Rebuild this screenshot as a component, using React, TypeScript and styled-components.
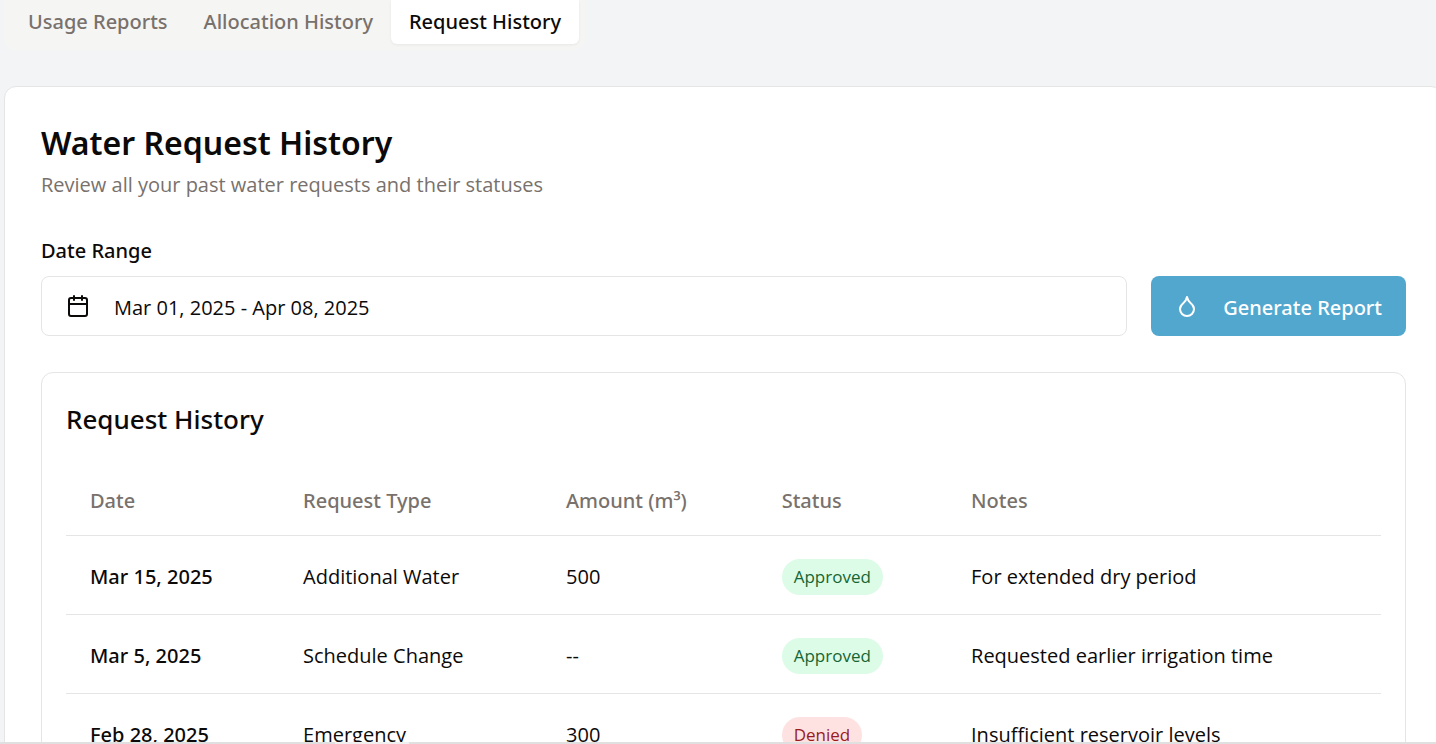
import React from "react";
import styled, { createGlobalStyle } from "styled-components";
import { Calendar, Droplet } from "lucide-react";

const mediumFont = `"Segoe UI", "Noto Sans", "Open Sans", sans-serif`;

const GlobalStyle = createGlobalStyle`
  *, *::before, *::after { box-sizing: border-box; }
  body {
    margin: 0;
    background: #f3f4f6;
    color: #0c0a09;
    font-family: "Segoe UI", "Open Sans", "Noto Sans", sans-serif;
    font-size: 20px;
    line-height: 30px;
  }
  button { font: inherit; color: inherit; }
`;

const Page = styled.main`
  height: 100vh;
  overflow: hidden;
  padding-left: 4px;
`;

const TabList = styled.div`
  display: inline-flex;
  padding: 0 6px 6px;
  border-radius: 0 0 12px 12px;
  background: #f5f5f4;
`;

const Tab = styled.button<{ $active?: boolean }>`
  height: 44px;
  padding: 0 18px;
  border: 0;
  border-radius: 0 0 6px 6px;
  background: ${(p) => (p.$active ? "#ffffff" : "transparent")};
  color: ${(p) => (p.$active ? "#0c0a09" : "#78716c")};
  box-shadow: ${(p) => (p.$active ? "0 1px 3px rgba(0, 0, 0, 0.06)" : "none")};
  font-family: ${mediumFont};
  font-weight: 500;
  white-space: nowrap;
`;

const Panel = styled.section`
  margin: 36px -7px 0 0;
  padding: 36px;
  border: 1px solid #e5e5e5;
  border-radius: 12px;
  background: #ffffff;
`;

const Title = styled.h1`
  margin: 0;
  font-family: ${mediumFont};
  font-size: 32px;
  line-height: 40px;
  font-weight: 600;
`;

const Description = styled.p`
  margin: 7px 0 36px;
  color: #78716c;
`;

const Label = styled.label`
  display: block;
  margin-bottom: 10px;
  font-family: ${mediumFont};
  font-weight: 500;
`;

const Controls = styled.div`
  display: flex;
  gap: 24px;
  margin-bottom: 36px;
`;

const ControlButton = styled.button`
  display: flex;
  align-items: center;
  gap: 24px;
  height: 60px;
  padding: 0 24px;
  border-radius: 8px;
  white-space: nowrap;
`;

const Caption = styled.span`
  padding-top: 4px;
`;

const DateButton = styled(ControlButton)`
  flex: 1;
  border: 1px solid #e5e5e5;
  background: #ffffff;
`;

const ReportButton = styled(ControlButton)`
  border: 0;
  background: #52a7cf;
  color: #ffffff;
  font-family: ${mediumFont};
  font-weight: 500;
`;

const Card = styled.section`
  padding: 24px;
  border: 1px solid #e5e5e5;
  border-radius: 12px;
`;

const CardTitle = styled.h2`
  margin: 0 0 24px;
  font-family: ${mediumFont};
  font-size: 26px;
  line-height: 44px;
  font-weight: 500;
`;

const Table = styled.table`
  width: 100%;
  table-layout: fixed;
  border-collapse: separate;
  border-spacing: 0;
`;

const Column = styled.col<{ $width: string }>`
  width: ${(p) => p.$width};
`;

const HeadCell = styled.th`
  height: 71px;
  padding: 2px 24px 0;
  border-bottom: 1px solid #e5e5e5;
  color: #78716c;
  font-family: ${mediumFont};
  font-weight: 500;
  text-align: left;
  white-space: nowrap;
`;

const Cell = styled.td<{ $strong?: boolean }>`
  height: 79px;
  padding: 4px 24px 0;
  border-bottom: 1px solid #e5e5e5;
  ${(p) => p.$strong && `font-family: ${mediumFont}; font-weight: 500;`}
  white-space: nowrap;
`;

const Badge = styled.span<{ $denied?: boolean }>`
  display: inline-block;
  padding: 6px 12px;
  border-radius: 18px;
  background: ${(p) => (p.$denied ? "#fee2e2" : "#dcfce7")};
  color: ${(p) => (p.$denied ? "#991b1b" : "#166534")};
  font-size: 17px;
  line-height: 24px;
  vertical-align: middle;
`;

const ScrollTrack = styled.div`
  position: fixed;
  inset: auto 0 0 0;
  display: flex;
  height: 2px;
  background: #e0e0e0;
`;

const ScrollGap = styled.div`
  width: 74px;
  margin-left: 335px;
  background: #f0f0f0;
`;

const requests = [
  { date: "Mar 15, 2025", type: "Additional Water", amount: "500", status: "Approved", notes: "For extended dry period" },
  { date: "Mar 5, 2025", type: "Schedule Change", amount: "--", status: "Approved", notes: "Requested earlier irrigation time" },
  { date: "Feb 28, 2025", type: "Emergency", amount: "300", status: "Denied", notes: "Insufficient reservoir levels" },
];

export default function App() {
  return (
    <>
      <GlobalStyle />
      <Page>
        <TabList role="tablist">
          <Tab role="tab" aria-selected={false}>Usage Reports</Tab>
          <Tab role="tab" aria-selected={false}>Allocation History</Tab>
          <Tab role="tab" aria-selected $active>Request History</Tab>
        </TabList>
        <Panel>
          <Title>Water Request History</Title>
          <Description>Review all your past water requests and their statuses</Description>
          <Label htmlFor="date-range">Date Range</Label>
          <Controls>
            <DateButton id="date-range" type="button">
              <Calendar size={24} />
              <Caption>Mar 01, 2025 - Apr 08, 2025</Caption>
            </DateButton>
            <ReportButton type="button">
              <Droplet size={24} />
              <Caption>Generate Report</Caption>
            </ReportButton>
          </Controls>
          <Card>
            <CardTitle>Request History</CardTitle>
            <Table>
              <colgroup>
                <Column $width="16.2%" />
                <Column $width="20%" />
                <Column $width="16.4%" />
                <Column $width="14.4%" />
                <Column $width="33%" />
              </colgroup>
              <thead>
                <tr>
                  <HeadCell>Date</HeadCell>
                  <HeadCell>Request Type</HeadCell>
                  <HeadCell>Amount (m³)</HeadCell>
                  <HeadCell>Status</HeadCell>
                  <HeadCell>Notes</HeadCell>
                </tr>
              </thead>
              <tbody>
                {requests.map((r) => (
                  <tr key={r.date}>
                    <Cell $strong>{r.date}</Cell>
                    <Cell>{r.type}</Cell>
                    <Cell>{r.amount}</Cell>
                    <Cell>
                      <Badge $denied={r.status === "Denied"}>{r.status}</Badge>
                    </Cell>
                    <Cell>{r.notes}</Cell>
                  </tr>
                ))}
              </tbody>
            </Table>
          </Card>
        </Panel>
      </Page>
      <ScrollTrack>
        <ScrollGap />
      </ScrollTrack>
    </>
  );
}
